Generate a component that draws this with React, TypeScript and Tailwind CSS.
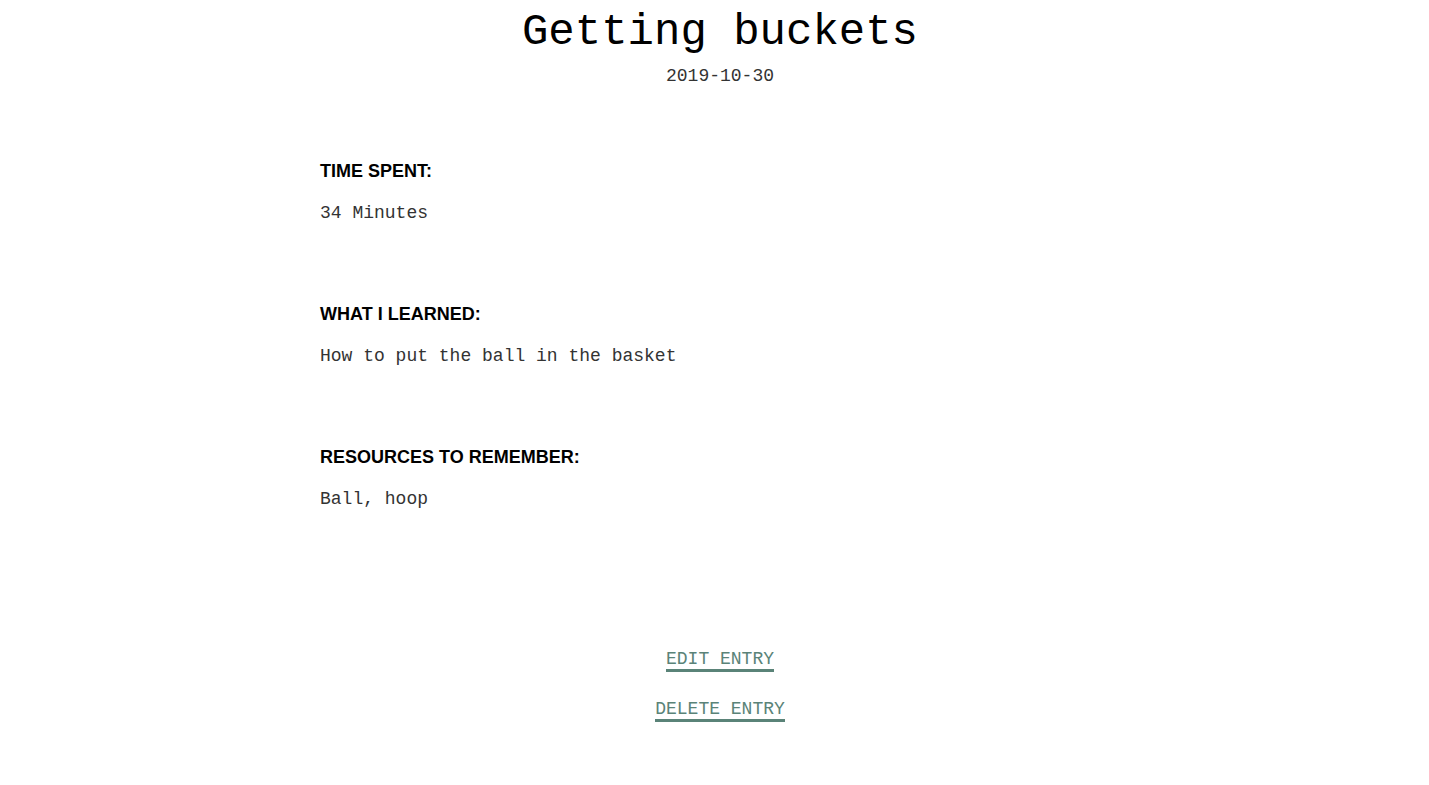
import React from "react";

const sections = [
  { label: "TIME SPENT:", value: "34 Minutes" },
  { label: "WHAT I LEARNED:", value: "How to put the ball in the basket" },
  { label: "RESOURCES TO REMEMBER:", value: "Ball, hoop" },
];

const mono = "font-['Liberation_Mono',monospace]";

const App = () => {
  return (
    <div className="min-h-screen bg-white">
      <div className="ml-[320px] w-[800px]">
        {/* Header */}
        <div className="text-center">
          <h1 className={`${mono} pt-[4px] text-[44px] leading-[56px] text-black`}>
            Getting buckets
          </h1>
          <p className={`${mono} mt-[4px] text-[18px] leading-[24px] text-[#333]`}>2019-10-30</p>
        </div>

        {/* Entry details */}
        <div className="mt-[71px]">
          {sections.map((s) => (
            <div key={s.label} className="mb-[77px]">
              <h3 className="font-['Liberation_Sans',Arial,sans-serif] text-[18px] font-bold leading-[24px] text-black">
                {s.label}
              </h3>
              <p className={`${mono} mt-[18px] text-[18px] leading-[24px] text-[#333]`}>{s.value}</p>
            </div>
          ))}
        </div>

        {/* Actions */}
        <div className="mt-[139px] flex flex-col items-center gap-[28px]">
          <a
            href="#"
            className={`${mono} border-b-[3px] border-[#5a8378] text-[18px] leading-[19px] text-[#5a8378]`}
          >
            EDIT ENTRY
          </a>
          <a
            href="#"
            className={`${mono} border-b-[3px] border-[#5a8378] text-[18px] leading-[19px] text-[#5a8378]`}
          >
            DELETE ENTRY
          </a>
        </div>
      </div>
    </div>
  );
};

export default App;
